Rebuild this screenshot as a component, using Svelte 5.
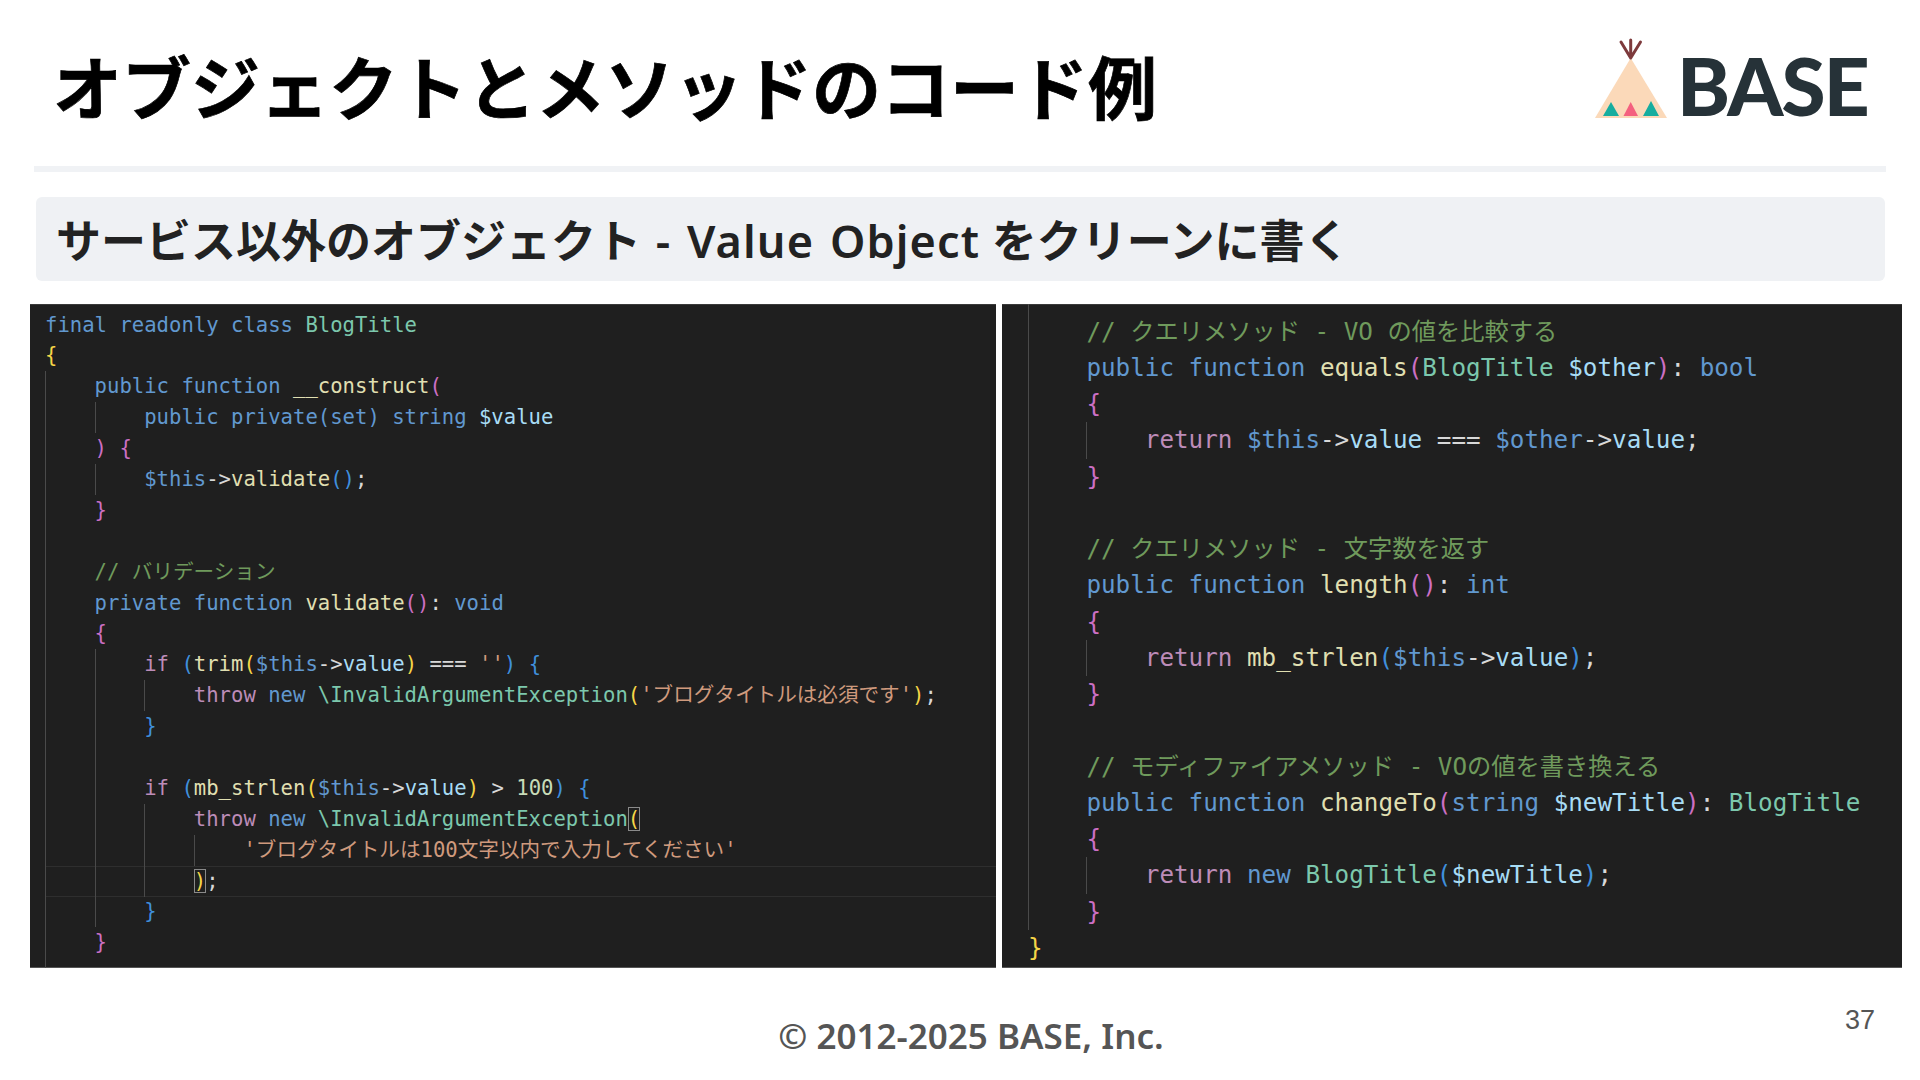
<script>
    const kw = "kw", ty = "ty", fn = "fn", va = "va", th = "th", st = "st", co = "co", ct = "ct", pl = "pl";
    const gold = "gold", pink = "pink", blue = "blue", nu = "nu", match = "gold match";

    const leftLines = [
        [[kw, "final readonly class "], [ty, "BlogTitle"]],
        [[gold, "{"]],
        [[pl, "    "], [kw, "public function "], [fn, "__construct"], [pink, "("]],
        [[pl, "        "], [kw, "public private(set) string "], [va, "$value"]],
        [[pl, "    "], [pink, ") {"]],
        [[pl, "        "], [th, "$this"], [pl, "->"], [fn, "validate"], [blue, "()"], [pl, ";"]],
        [[pl, "    "], [pink, "}"]],
        [],
        [[pl, "    "], [co, "// バリデーション"]],
        [[pl, "    "], [kw, "private function "], [fn, "validate"], [pink, "()"], [pl, ": "], [kw, "void"]],
        [[pl, "    "], [pink, "{"]],
        [[pl, "        "], [ct, "if "], [blue, "("], [fn, "trim"], [gold, "("], [th, "$this"], [pl, "->"], [va, "value"], [gold, ")"], [pl, " === "], [st, "''"], [blue, ") {"]],
        [[pl, "            "], [ct, "throw "], [kw, "new "], [ty, "\\InvalidArgumentException"], [gold, "("], [st, "'ブログタイトルは必須です'"], [gold, ")"], [pl, ";"]],
        [[pl, "        "], [blue, "}"]],
        [],
        [[pl, "        "], [ct, "if "], [blue, "("], [fn, "mb_strlen"], [gold, "("], [th, "$this"], [pl, "->"], [va, "value"], [gold, ")"], [pl, " > "], [nu, "100"], [blue, ") {"]],
        [[pl, "            "], [ct, "throw "], [kw, "new "], [ty, "\\InvalidArgumentException"], [match, "("]],
        [[pl, "                "], [st, "'ブログタイトルは100文字以内で入力してください'"]],
        [[pl, "            "], [match, ")"], [pl, ";"]],
        [[pl, "        "], [blue, "}"]],
        [[pl, "    "], [pink, "}"]]
    ];

    const rightLines = [
        [[pl, "    "], [co, "// クエリメソッド - VO の値を比較する"]],
        [[pl, "    "], [kw, "public function "], [fn, "equals"], [pink, "("], [ty, "BlogTitle "], [va, "$other"], [pink, ")"], [pl, ": "], [kw, "bool"]],
        [[pl, "    "], [pink, "{"]],
        [[pl, "        "], [ct, "return "], [th, "$this"], [pl, "->"], [va, "value"], [pl, " === "], [th, "$other"], [pl, "->"], [va, "value"], [pl, ";"]],
        [[pl, "    "], [pink, "}"]],
        [],
        [[pl, "    "], [co, "// クエリメソッド - 文字数を返す"]],
        [[pl, "    "], [kw, "public function "], [fn, "length"], [pink, "()"], [pl, ": "], [kw, "int"]],
        [[pl, "    "], [pink, "{"]],
        [[pl, "        "], [ct, "return "], [fn, "mb_strlen"], [blue, "("], [th, "$this"], [pl, "->"], [va, "value"], [blue, ")"], [pl, ";"]],
        [[pl, "    "], [pink, "}"]],
        [],
        [[pl, "    "], [co, "// モディファイアメソッド - VOの値を書き換える"]],
        [[pl, "    "], [kw, "public function "], [fn, "changeTo"], [pink, "("], [kw, "string "], [va, "$newTitle"], [pink, ")"], [pl, ": "], [ty, "BlogTitle"]],
        [[pl, "    "], [pink, "{"]],
        [[pl, "        "], [ct, "return "], [kw, "new "], [ty, "BlogTitle"], [blue, "("], [va, "$newTitle"], [blue, ")"], [pl, ";"]],
        [[pl, "    "], [pink, "}"]],
        [[gold, "}"]]
    ];

    // indent guides: column, first line, number of lines
    const leftGuides = [[0, 2, 20], [1, 3, 1], [1, 5, 1], [1, 11, 9], [2, 12, 1], [2, 16, 3], [3, 17, 1]];
    const rightGuides = [[0, -1, 18], [1, 3, 1], [1, 9, 1], [1, 15, 1]];
</script>

<div class="slide">
    <header class="head">
        <h1>オブジェクトとメソッドのコード例</h1>
        <div class="logo">
            <svg width="74" height="82" viewBox="1594 39 74 82" aria-hidden="true">
                <path d="M1630.7 59 L1667 119 L1595 119 Z" fill="#fbd9b9"/>
                <path d="M1603 117 L1611 103 L1619 117 Z" fill="#16ad9f"/>
                <path d="M1623.5 117 L1630.7 103 L1638 117 Z" fill="#f4607f"/>
                <path d="M1643 117 L1651 102 L1659 117 Z" fill="#16ad9f"/>
                <path d="M1630.7 59 L1621 43 M1630.7 59 L1630.7 41 M1630.7 59 L1640.5 43" stroke="#7d3a3c" stroke-width="3" stroke-linecap="round" fill="none"/>
            </svg>
            <span class="wordmark">BASE</span>
        </div>
    </header>
    <div class="rule"></div>

    <h2 class="sub">サービス以外のオブジェクト <span class="latin">- Value Object</span> をクリーンに書く</h2>

    <div class="panels">
        <div class="panel left">
            <div class="code">
                <div class="current"></div>
                {#each leftGuides as g}
                    <i class="guide" style="--c:{g[0]};--a:{g[1]};--n:{g[2]}"></i>
                {/each}
                {#each leftLines as line}
                    <div class="line">{#each line as t}<span class={t[0]}>{t[1]}</span>{/each}</div>
                {/each}
            </div>
        </div>
        <div class="panel right">
            <div class="code">
                {#each rightGuides as g}
                    <i class="guide" style="--c:{g[0]};--a:{g[1]};--n:{g[2]}"></i>
                {/each}
                {#each rightLines as line}
                    <div class="line">{#each line as t}<span class={t[0]}>{t[1]}</span>{/each}</div>
                {/each}
            </div>
        </div>
    </div>

    <footer class="foot">
        <span class="copy">© 2012-2025 BASE, Inc.</span>
        <span class="page">37</span>
    </footer>
</div>

<style>
    :global(body) {
        background: #fff;
    }

    .slide {
        width: 1920px;
        height: 1080px;
        overflow: hidden;
        font-family: "Noto Sans", "Noto Sans CJK JP", sans-serif;
    }

    .head {
        height: 166px;
        display: flex;
        align-items: center;
        justify-content: space-between;
        padding: 3px 52px 0 53px;
        box-sizing: border-box;
    }

    h1 {
        margin: 0;
        font-family: "Noto Sans CJK JP", sans-serif;
        font-size: 69px;
        font-weight: 700;
        -webkit-text-stroke: 0.7px #000;
        color: #000;
    }

    .logo {
        display: flex;
        align-items: flex-end;
        gap: 9px;
        margin-bottom: 11px;
    }

    .wordmark {
        margin-bottom: 5px;
        font-family: Lato, sans-serif;
        font-size: 80px;
        font-weight: 900;
        line-height: 60px;
        letter-spacing: -1.8px;
        color: #263238;
    }

    .rule {
        height: 6px;
        margin: 0 34px;
        background: #f0f2f5;
    }

    .sub {
        margin: 25px 35px 0 36px;
        height: 84px;
        padding-left: 20px;
        line-height: 88px;
        background: #eff1f4;
        border-radius: 6px;
        font-size: 45px;
        font-weight: 600;
        color: #222;
    }

    .latin {
        margin-left: 3px;
        letter-spacing: 1.1px;
        word-spacing: 3px;
    }

    .panels {
        margin: 23px 18px 0 30px;
        height: 664px;
        display: flex;
        gap: 6px;
    }

    .panel {
        background: #1f1f1f;
        overflow: hidden;
        box-shadow: inset 0 1px 0 #3a3a3a, inset 0 -1px 0 #555;
    }

    .panel.left {
        width: 966px;
        box-sizing: border-box;
        padding-left: 15px;
        --lh: 30.9px;
        --top: 5.5px;
        font-size: 20.6px;
    }

    .panel.right {
        flex: 1;
        padding-left: 26px;
        --lh: 36.25px;
        --top: 9.5px;
        font-size: 24.25px;
    }

    .code {
        position: relative;
        box-sizing: border-box;
        height: 100%;
        padding-top: var(--top);
        font-family: "DejaVu Sans Mono", "Noto Sans CJK JP", monospace;
        color: #d4d4d4;
    }

    .line {
        height: var(--lh);
        line-height: var(--lh);
        white-space: pre;
    }

    .guide {
        position: absolute;
        width: 1px;
        background: #4a4a4a;
        left: calc(var(--c) * 4ch);
        top: calc(var(--top) + var(--a) * var(--lh));
        height: calc(var(--n) * var(--lh));
    }

    /* cursor line */
    .current {
        position: absolute;
        left: 0;
        right: 0;
        top: calc(var(--top) + 18 * var(--lh));
        height: var(--lh);
        box-sizing: border-box;
        border-top: 1px solid #2e2e2e;
        border-bottom: 1px solid #2e2e2e;
    }

    .kw { color: #6198cf; }
    .ty { color: #7cc8ad; }
    .fn { color: #e0dfb1; }
    .va { color: #a8dcf5; }
    .th { color: #6198cf; }
    .st { color: #cf9a7d; }
    .co { color: #6f9a5c; }
    .ct { color: #bd8cb8; }
    .nu { color: #c8dcb8; }
    .pl { color: #d8d8d8; }
    .gold { color: #f5d547; }
    .pink { color: #cc6fc4; }
    .blue { color: #3f8fdc; }

    .match {
        outline: 1px solid #8a8a8a;
        outline-offset: -1px;
    }

    .foot {
        position: relative;
        display: flex;
        justify-content: center;
        padding: 45px 0 0 22px;
    }

    .copy {
        font-size: 35px;
        font-weight: 600;
        line-height: 46px;
        color: #555;
    }

    .page {
        position: absolute;
        right: 45px;
        top: 37px;
        font-family: "Liberation Sans", sans-serif;
        font-size: 27px;
        color: #555;
    }
</style>
